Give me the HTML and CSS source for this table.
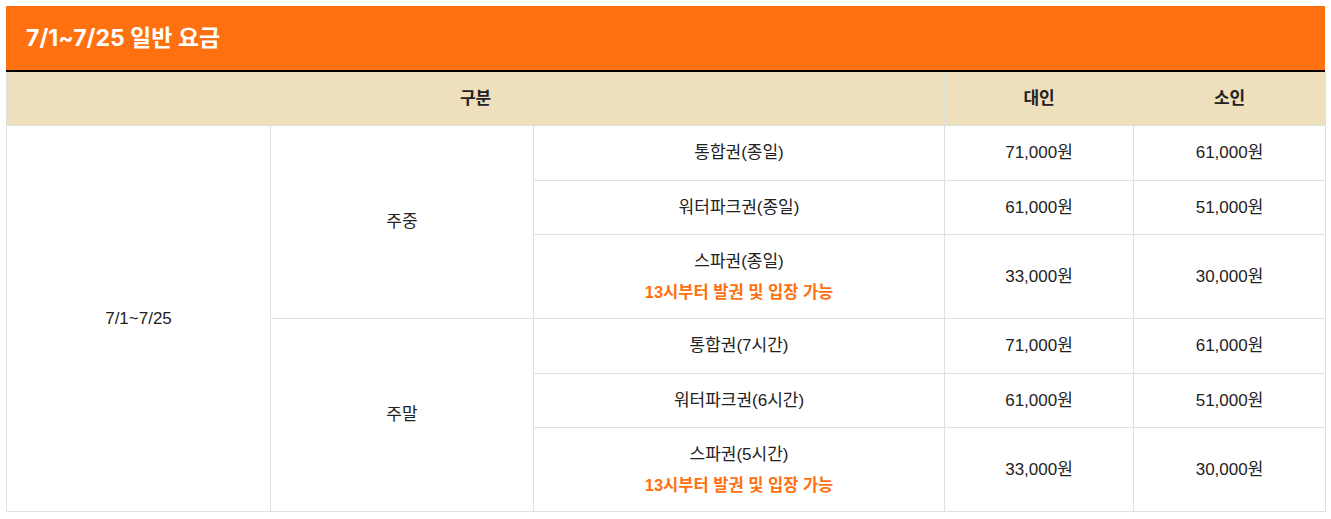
FILE: index.html
```html
<!DOCTYPE html>
<html lang="ko">
<head>
<meta charset="utf-8">
<link rel="stylesheet" href="styles.css">
</head>
<body>
<div class="wrap">
  <h2 class="title">7/1~7/25 일반 요금</h2>
  <table class="fare">
    <colgroup>
      <col class="c1"><col class="c2"><col class="c3"><col class="c4"><col class="c5">
    </colgroup>
    <thead>
      <tr class="head"><th colspan="3">구분</th><th>대인</th><th>소인</th></tr>
    </thead>
    <tbody>
      <tr class="ra"><td rowspan="6">7/1~7/25</td><td rowspan="3">주중</td><td>통합권(종일)</td><td>71,000원</td><td>61,000원</td></tr>
      <tr class="rb"><td>워터파크권(종일)</td><td>61,000원</td><td>51,000원</td></tr>
      <tr class="rt"><td>스파권(종일)<span class="note">13시부터 발권 및 입장 가능</span></td><td>33,000원</td><td>30,000원</td></tr>
      <tr class="ra"><td rowspan="3">주말</td><td>통합권(7시간)</td><td>71,000원</td><td>61,000원</td></tr>
      <tr class="rb"><td>워터파크권(6시간)</td><td>61,000원</td><td>51,000원</td></tr>
      <tr class="rt"><td>스파권(5시간)<span class="note">13시부터 발권 및 입장 가능</span></td><td>33,000원</td><td>30,000원</td></tr>
    </tbody>
  </table>
</div>
</body>
</html>
```
FILE: styles.css
```css
html, body { margin: 0; padding: 0; background: #fff; }
body { font-family: "Liberation Sans", "Noto Sans CJK KR", sans-serif; color: #222; }
.wrap { padding: 6px 6px 0 6px; }
.title {
  margin: 0;
  box-sizing: border-box;
  height: 66px;
  background: #ff7010;
  color: #fff;
  font-family: Inter, "Noto Sans CJK KR", sans-serif;
  font-size: 23px;
  font-weight: 700;
  line-height: 64px;
  padding-left: 20px;
  border-bottom: 2px solid #000;
}
.fare {
  width: 1319px;
  border-collapse: collapse;
  table-layout: fixed;
  font-size: 17px;
  line-height: 24px;
}
.c1 { width: 264px; }
.c2 { width: 263px; }
.c3 { width: 411px; }
.c4 { width: 189px; }
.c5 { width: 192px; }
.fare th, .fare td {
  border: 1px solid #e0e0e0;
  text-align: center;
  vertical-align: middle;
  padding: 1px 0 0;
}
.fare thead th { border-top: none; }
.head { height: 53px; }
.head th { background: #eedfbd; font-weight: 700; color: #222; }
.ra { height: 55px; }
.rb { height: 54px; }
.rt { height: 84px; }
.note {
  display: block;
  color: #ff7010;
  font-size: 16.5px;
  font-weight: 700;
  margin-top: 6px;
}
```
